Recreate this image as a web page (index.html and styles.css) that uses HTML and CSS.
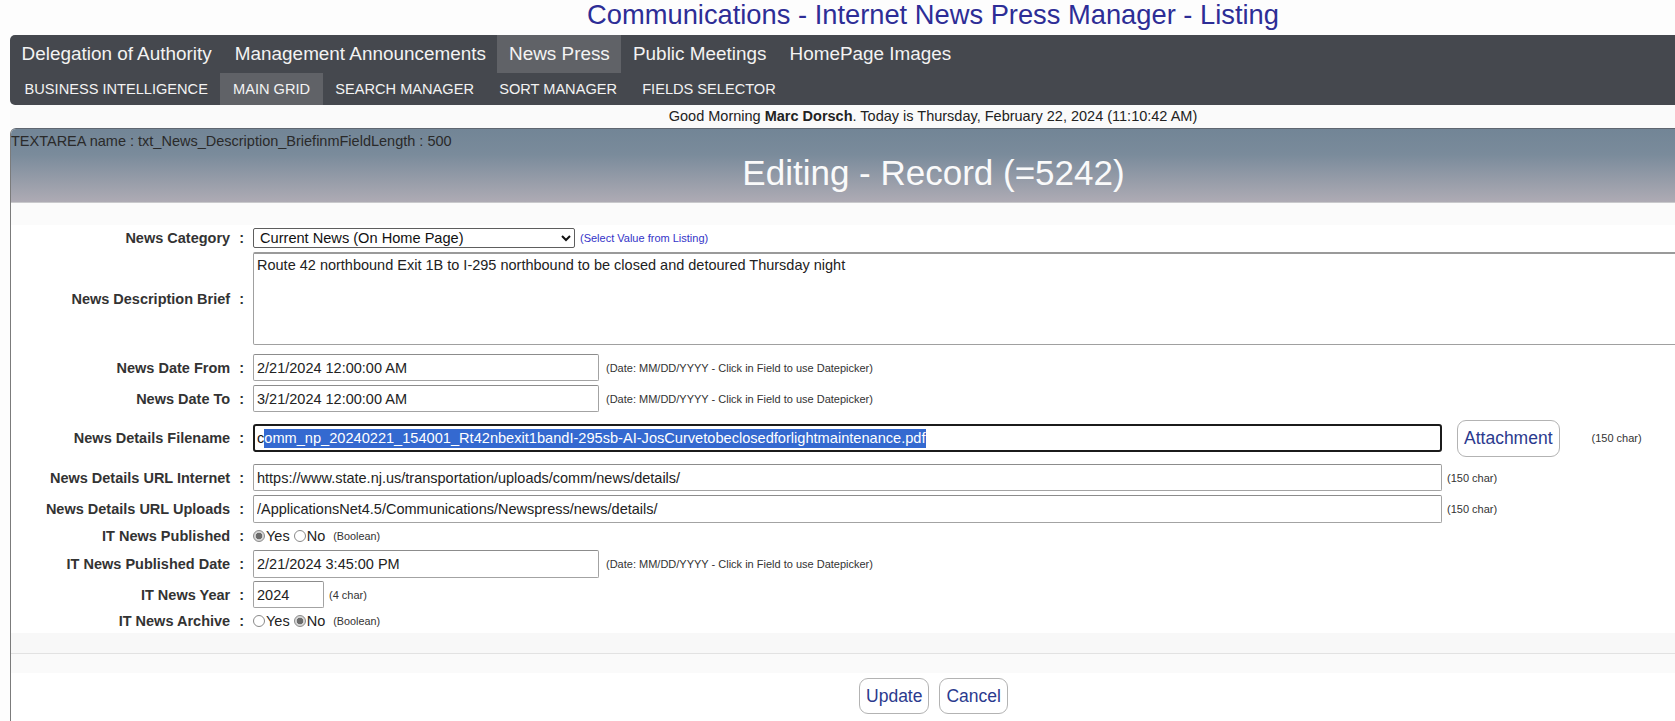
FILE: index.html
```html
<!DOCTYPE html>
<html lang="en">
<head>
<meta charset="utf-8">
<title>Communications - Internet News Press Manager - Listing</title>
<link rel="stylesheet" href="styles.css">
</head>
<body>
<div class="page">
  <h1 class="title">Communications - Internet News Press Manager - Listing</h1>
  <nav class="nav">
    <ul class="menu menu-main">
      <li>Delegation of Authority</li>
      <li>Management Announcements</li>
      <li class="active">News Press</li>
      <li>Public Meetings</li>
      <li>HomePage Images</li>
    </ul>
    <ul class="menu menu-sub">
      <li>BUSINESS INTELLIGENCE</li>
      <li class="active">MAIN GRID</li>
      <li>SEARCH MANAGER</li>
      <li>SORT MANAGER</li>
      <li>FIELDS SELECTOR</li>
    </ul>
  </nav>
  <div class="greeting">Good Morning <b>Marc Dorsch</b>. Today is Thursday, February 22, 2024 (11:10:42 AM)</div>
  <section class="panel">
    <header class="panel-head">
      <div class="debug">TEXTAREA name : txt_News_Description_BriefinmFieldLength : 500</div>
      <h2 class="panel-title">Editing - Record (=5242)</h2>
    </header>
    <div class="form">
      <div class="row r-cat">
        <div class="label">News Category<span class="colon">:</span></div>
        <div class="field">
          <select class="select"><option>Current News (On Home Page)</option></select>
          <span class="note note-blue">(Select Value from Listing)</span>
        </div>
      </div>
      <div class="row r-desc">
        <div class="label">News Description Brief<span class="colon">:</span></div>
        <div class="field">
          <textarea class="textarea">Route 42 northbound Exit 1B to I-295 northbound to be closed and detoured Thursday night</textarea>
        </div>
      </div>
      <div class="row r-from">
        <div class="label">News Date From<span class="colon">:</span></div>
        <div class="field">
          <input class="input w-date" type="text" value="2/21/2024 12:00:00 AM">
          <span class="note note-date">(Date: MM/DD/YYYY - Click in Field to use Datepicker)</span>
        </div>
      </div>
      <div class="row r-to">
        <div class="label">News Date To<span class="colon">:</span></div>
        <div class="field">
          <input class="input w-date" type="text" value="3/21/2024 12:00:00 AM">
          <span class="note note-date">(Date: MM/DD/YYYY - Click in Field to use Datepicker)</span>
        </div>
      </div>
      <div class="row r-file">
        <div class="label">News Details Filename<span class="colon">:</span></div>
        <div class="field">
          <div class="input w-long focused"><span>c</span><span class="sel">omm_np_20240221_154001_Rt42nbexit1bandI-295sb-AI-JosCurvetobeclosedforlightmaintenance.pdf</span></div>
          <button class="btn btn-attach" type="button">Attachment</button>
          <span class="note note-attach">(150 char)</span>
        </div>
      </div>
      <div class="row r-url1">
        <div class="label">News Details URL Internet<span class="colon">:</span></div>
        <div class="field">
          <input class="input w-long" type="text" value="https://www.state.nj.us/transportation/uploads/comm/news/details/">
          <span class="note">(150 char)</span>
        </div>
      </div>
      <div class="row r-url2">
        <div class="label">News Details URL Uploads<span class="colon">:</span></div>
        <div class="field">
          <input class="input w-long" type="text" value="/ApplicationsNet4.5/Communications/Newspress/news/details/">
          <span class="note">(150 char)</span>
        </div>
      </div>
      <div class="row r-pub">
        <div class="label">IT News Published<span class="colon">:</span></div>
        <div class="field radios">
          <span class="radio checked"></span><span class="rtext">Yes</span>
          <span class="radio"></span><span class="rtext">No</span>
          <span class="note note-bool">(Boolean)</span>
        </div>
      </div>
      <div class="row r-pubdate">
        <div class="label">IT News Published Date<span class="colon">:</span></div>
        <div class="field">
          <input class="input w-date" type="text" value="2/21/2024 3:45:00 PM">
          <span class="note note-date">(Date: MM/DD/YYYY - Click in Field to use Datepicker)</span>
        </div>
      </div>
      <div class="row r-year">
        <div class="label">IT News Year<span class="colon">:</span></div>
        <div class="field">
          <input class="input w-year" type="text" value="2024">
          <span class="note">(4 char)</span>
        </div>
      </div>
      <div class="row r-arch">
        <div class="label">IT News Archive<span class="colon">:</span></div>
        <div class="field radios">
          <span class="radio"></span><span class="rtext">Yes</span>
          <span class="radio checked"></span><span class="rtext">No</span>
          <span class="note note-bool">(Boolean)</span>
        </div>
      </div>
    </div>
    <div class="band"></div>
    <div class="band band-2"></div>
    <div class="actions">
      <button class="btn" type="button">Update</button>
      <button class="btn" type="button">Cancel</button>
    </div>
  </section>
</div>
</body>
</html>
```

FILE: styles.css
```css
html, body {
  margin: 0;
  padding: 0;
  overflow: hidden;
  background: #fdfdfd;
  font-family: "Liberation Sans", Arial, sans-serif;
  color: #222;
}

.page {
  width: 1846px;
  margin-left: 10px;
}

.title {
  margin: 0;
  height: 35px;
  line-height: 30px;
  font-size: 27.3px;
  font-weight: normal;
  text-align: center;
  color: #2d2d96;
}

.nav {
  background: #45484e;
  border-radius: 5px;
  color: #f3f3f3;
}

.menu {
  list-style: none;
  margin: 0;
  padding: 0;
  display: flex;
}

.menu-main li {
  height: 38px;
  line-height: 38px;
  font-size: 18.9px;
  padding: 0 11.6px;
}

.menu-sub {
  padding-left: 2px;
}

.menu-sub li {
  height: 32px;
  line-height: 32px;
  font-size: 14.6px;
  padding: 0 12.6px;
}

.menu li.active {
  background: #606267;
}

.greeting {
  height: 23px;
  line-height: 23px;
  text-align: center;
  font-size: 14.5px;
  background: #fafafa;
  color: #222;
}

.greeting b {
  font-weight: 600;
}

.panel {
  border-left: 1px solid #7b7b7b;
  border-top: 1px solid #5f6670;
  border-top-left-radius: 6px;
  overflow: hidden;
  background: #fff;
}

.panel-head {
  height: 73px;
  background: linear-gradient(#728596 0%, #7a8b9b 35%, #aeabb4 100%);
  border-bottom: 1px solid #c9c9cc;
}

.debug {
  font-size: 14.5px;
  line-height: 17px;
  padding-top: 4px;
  color: #2a2a2a;
}

.panel-title {
  margin: 0;
  margin-top: 3px;
  font-size: 35px;
  line-height: 40px;
  font-weight: normal;
  text-align: center;
  color: #fafafa;
}

.form {
  background: linear-gradient(#fbfbfb 0 22px, #fff 22px);
  padding-top: 24px;
  padding-bottom: 3px;
}

.row {
  display: flex;
  align-items: center;
}

.label {
  width: 233px;
  flex: none;
  text-align: right;
  font-size: 14.5px;
  font-weight: bold;
  color: #333;
  white-space: nowrap;
}

.colon {
  margin-left: 9px;
}

.field {
  margin-left: 9px;
  display: flex;
  align-items: center;
  white-space: nowrap;
}

.r-cat { height: 22px; }
.r-desc { height: 93px; margin-top: 3px; }
.r-from { height: 27px; margin-top: 9px; }
.r-to { height: 27px; margin-top: 4px; }
.r-file { height: 38px; margin-top: 7px; }
.r-url1 { height: 27px; margin-top: 7px; }
.r-url2 { height: 28px; margin-top: 4px; }
.r-pub { height: 18px; margin-top: 4px; }
.r-pubdate { height: 28px; margin-top: 5px; }
.r-year { height: 27px; margin-top: 3px; }
.r-arch { height: 18px; margin-top: 4px; }

.select {
  width: 322px;
  height: 20px;
  font-family: "Liberation Sans", Arial, sans-serif;
  font-size: 14.6px;
  color: #111;
  border: 1px solid #5e5e5e;
  border-radius: 2px;
  background: #fff;
  padding: 0 0 0 2px;
  margin: 0;
}

.textarea {
  display: block;
  width: 1640px;
  height: 93px;
  box-sizing: border-box;
  border: 1px solid #a0a0a0;
  border-top: 2px solid #9a9a9a;
  border-radius: 2px;
  padding: 2px 3px;
  margin: 0;
  resize: none;
  font-family: "Liberation Sans", Arial, sans-serif;
  font-size: 14.5px;
  line-height: 18px;
  color: #222;
  background: #fff;
}

.input {
  height: 27px;
  box-sizing: border-box;
  border: 1px solid #a3a3a3;
  border-top-color: #8c8c8c;
  border-radius: 2px;
  padding: 0 3px;
  margin: 0;
  font-family: "Liberation Sans", Arial, sans-serif;
  font-size: 14.5px;
  color: #222;
  background: #fff;
  outline: none;
}

.w-date { width: 346px; }
.w-long { width: 1189px; }
.w-year { width: 71px; }
.r-url2 .input, .r-pubdate .input { height: 28px; }

.focused {
  height: 28px;
  border: 2px solid #1b1b1b;
  border-radius: 3px;
  padding: 0 2px;
  display: flex;
  align-items: center;
  color: #111;
  font-size: 14.6px;
}

.sel {
  background: #3469d0;
  color: #fff;
  line-height: 19px;
}

.note {
  font-size: 11px;
  color: #333;
  margin-left: 5px;
}

.note-blue {
  color: #3434c8;
}

.note-date {
  margin-left: 7px;
}

.note-attach {
  margin-left: 32px;
}

.note-bool {
  margin-left: 4px;
  font-size: 10.8px;
}

.btn {
  height: 36px;
  box-sizing: border-box;
  padding: 0 6px;
  border: 1px solid #b3b3b3;
  border-radius: 9px;
  background: #fff;
  font-family: "Liberation Sans", Arial, sans-serif;
  font-size: 17.5px;
  color: #2b3a8e;
  margin: 0;
}

.btn-attach {
  height: 37px;
  margin-left: 15px;
}

.radios {
  font-size: 14.5px;
  color: #222;
}

.radio {
  width: 12px;
  height: 12px;
  box-sizing: border-box;
  border: 1px solid #8a8a8a;
  border-radius: 50%;
  background: #fff;
}

.radio.checked {
  background: radial-gradient(circle, #6a6a6a 0 3px, #d6d6d6 3.6px 100%);
}

.rtext {
  margin-left: 1px;
  margin-right: 4px;
}

.band {
  height: 20px;
  background: #f8f8f8;
  border-bottom: 1px solid #e2e2e2;
}

.band-2 {
  height: 19px;
  background: #fafafa;
  border-bottom: none;
}

.actions {
  display: flex;
  justify-content: center;
  gap: 10px;
  padding-top: 5px;
  height: 44px;
  border-bottom: 4px solid #f4f4f4;
}
```
